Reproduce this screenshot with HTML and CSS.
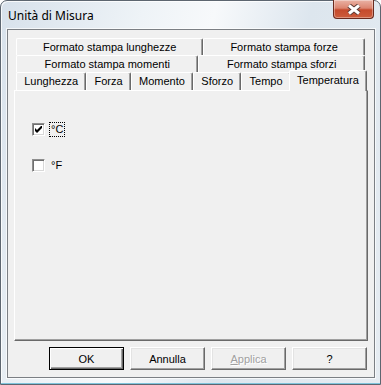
FILE: index.html
```
<!DOCTYPE html>
<html lang="it">

<head>
    <meta charset="UTF-8">
    <title>Unità di Misura</title>
    <link rel="stylesheet" href="styles.css">
</head>

<body>

    <div class="window">
        <div class="titlebar">
            <span class="title">Unità di Misura</span>
            <button class="close" type="button">
                <svg width="16" height="11" viewBox="0 0 16 11">
                    <path d="M3 1.5 L13 9.5 M13 1.5 L3 9.5" stroke="#5a3a34" stroke-width="5" />
                    <path d="M3 1.5 L13 9.5 M13 1.5 L3 9.5" stroke="#ffffff" stroke-width="3" />
                </svg>
            </button>
        </div>

        <div class="client">
            <!-- tab rows, front row last -->
            <div class="tabs">
                <div class="tab-row">
                    <div class="tab">Formato stampa lunghezze</div>
                    <div class="tab">Formato stampa forze</div>
                </div>
                <div class="tab-row">
                    <div class="tab">Formato stampa momenti</div>
                    <div class="tab">Formato stampa sforzi</div>
                </div>
                <div class="tab-row front">
                    <div class="tab">Lunghezza</div>
                    <div class="tab">Forza</div>
                    <div class="tab">Momento</div>
                    <div class="tab">Sforzo</div>
                    <div class="tab">Tempo</div>
                    <div class="tab active">Temperatura</div>
                </div>
            </div>

            <div class="panel">
                <label class="check">
                    <span class="box">
                        <svg width="7" height="7" viewBox="0 0 7 7">
                            <path d="M0 2 L2 4 L6 0 L7 0 L7 2 L2 7 L0 5 Z" fill="#000" />
                        </svg>
                    </span>
                    <span class="label focus">°C</span>
                </label>
                <label class="check">
                    <span class="box"></span>
                    <span class="label">°F</span>
                </label>
            </div>

            <div class="buttons">
                <button class="btn default" type="button">OK</button>
                <button class="btn" type="button">Annulla</button>
                <button class="btn disabled" type="button"><u>A</u>pplica</button>
                <button class="btn" type="button">?</button>
            </div>
        </div>
    </div>

</body>

</html>
```

FILE: styles.css
```
body {
    margin: 0;
    font-family: "Liberation Sans", Arial, sans-serif;
    font-size: 11px;
    color: #000;
}

.window {
    width: 381px;
    height: 385px;
    box-sizing: border-box;
    display: flex;
    flex-direction: column;
    padding-bottom: 6px;
    border: 1px solid #5d6670;
    border-radius: 7px 7px 0 0;
    background: linear-gradient(105deg, #d7e1eb 0%, #eef3f7 30%, #f7f9fb 45%, #dde6ee 65%, #e6ecf2 100%);
    box-shadow: inset 0 -1px 0 #7fc4dc, inset 1px 1px 0 rgba(255, 255, 255, 0.8);
}

.titlebar {
    height: 28px;
    display: flex;
    align-items: center;
    justify-content: space-between;
    padding-left: 7px;
}

.title {
    font-family: "Noto Sans", "Liberation Sans", sans-serif;
    font-size: 12px;
    color: #000;
}

.close {
    align-self: flex-start;
    margin: -1px 6px 0 0;
    width: 41px;
    height: 19px;
    padding: 0;
    display: flex;
    align-items: center;
    justify-content: center;
    border: 1px solid #6a2a1e;
    border-top: none;
    border-radius: 0 0 4px 4px;
    background: linear-gradient(#eab3a5 0%, #dc8570 45%, #c54a2c 55%, #cd5d3c 100%);
    box-shadow: inset 0 0 0 1px rgba(255, 255, 255, 0.35);
}

.client {
    flex: 1;
    margin: 0 5px 0 6px;
    display: flex;
    flex-direction: column;
    padding: 8px 6px 7px;
    border: 1px solid #7b7f84;
    background-color: #f0f0f0;
    box-shadow: 0 0 0 1px rgba(255, 255, 255, 0.7);
}

/* tabs */
.tabs {
    margin: 0 3px 0 2px;
}

.tab-row {
    display: flex;
    height: 17px;
}

.tab-row.front {
    height: 18px;
}

.tab {
    flex: auto;
    box-sizing: border-box;
    border-top: 1px solid #fff;
    border-left: 1px solid #fff;
    border-right: 1px solid #696969;
    border-radius: 2px 2px 0 0;
    box-shadow: inset -1px 0 0 #a0a0a0;
    background-color: #f0f0f0;
    text-align: center;
    line-height: 16px;
    white-space: nowrap;
}

.front .tab {
    line-height: 17px;
}

.front .tab.active {
    position: relative;
    z-index: 1;
    margin: -2px -2px -1px;
    line-height: 19px;
}

/* page */
.panel {
    height: 251px;
    box-sizing: border-box;
    padding: 31px 0 0 17px;
    border: 1px solid;
    border-color: #fff #696969 #696969 #fff;
    box-shadow: inset -1px -1px 0 #a0a0a0;
}

.check {
    display: flex;
    align-items: center;
    height: 15px;
    margin-bottom: 21px;
}

.box {
    width: 13px;
    height: 13px;
    box-sizing: border-box;
    display: flex;
    align-items: center;
    justify-content: center;
    border: 1px solid;
    border-color: #8e8e8e #fff #fff #8e8e8e;
    box-shadow: inset 1px 1px 0 #6f6f6f, inset -1px -1px 0 #d8d8d8;
    background-color: #fff;
}

.label {
    margin-left: 4px;
    padding: 0 1px;
    line-height: 13px;
    border: 1px solid transparent;
}

.focus {
    border: 1px dotted #000;
}

/* buttons */
.buttons {
    display: flex;
    justify-content: flex-end;
    gap: 6px;
    margin-top: 6px;
    padding-right: 1px;
}

.btn {
    width: 75px;
    height: 23px;
    padding: 0;
    font-family: "Liberation Sans", Arial, sans-serif;
    font-size: 11px;
    color: #000;
    background-color: #f0f0f0;
    border: 1px solid;
    border-color: #fff #696969 #696969 #fff;
    box-shadow: inset -1px -1px 0 #a0a0a0, inset 1px 1px 0 #e3e3e3;
}

.btn.default {
    border-color: #000;
    box-shadow: inset 1px 1px 0 #fff, inset -1px -1px 0 #696969, inset -2px -2px 0 #a0a0a0;
}

.btn.disabled {
    color: #a0a0a0;
    text-shadow: 1px 1px 0 #fff;
}
```
